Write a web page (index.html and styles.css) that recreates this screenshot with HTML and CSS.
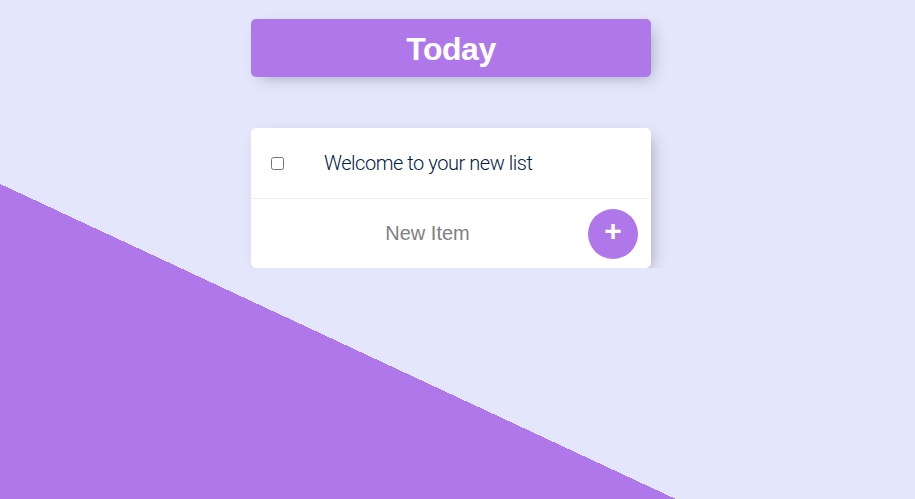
FILE: index.html
```html
<!DOCTYPE html>
<html lang="en">
<head>
<meta charset="utf-8">
<title>To Do List</title>
<link rel="stylesheet" href="styles.css">
</head>
<body>
<div class="page">
  <div class="box heading">
    <h1>Today</h1>
  </div>
  <div class="box list">
    <div class="item">
      <input type="checkbox" class="check">
      <p class="item-text">Welcome to your new list</p>
    </div>
    <form class="item add-form" onsubmit="return false;">
      <input type="text" class="new-item" placeholder="New Item" autocomplete="off">
      <button type="submit" class="add-btn">+</button>
    </form>
  </div>
</div>
</body>
</html>
```
FILE: styles.css
```css
html {
  height: 100%;
  background-color: #E4E6FC;
  background-image: linear-gradient(25deg, #B077EA 34.04%, #E4E6FC 34.04%);
  font-family: "Liberation Sans", Arial, sans-serif;
}

body {
  margin: 0;
}

.page {
  display: flex;
  flex-direction: column;
  align-items: center;
  padding-top: 19px;
  padding-right: 13px;
  gap: 51px;
}

.box {
  width: 400px;
  background: #ffffff;
  border-radius: 5px;
  box-shadow: 5px 5px 15px -5px rgba(0, 0, 0, 0.3);
}

.heading {
  background-color: #B077EA;
  text-align: center;
}

.heading h1 {
  margin: 0;
  height: 58px;
  line-height: 60px;
  color: #ffffff;
  font-size: 32px;
  font-weight: 700;
  letter-spacing: -0.5px;
}

.item {
  min-height: 70px;
  display: flex;
  align-items: center;
  border-bottom: 1px solid #F1F1F1;
}

.item:last-child {
  border-bottom: 0;
  min-height: 69px;
}

.check {
  margin: 0 20px;
  width: 13px;
  height: 13px;
}

.item-text {
  margin: 0;
  padding: 0 20px;
  font-family: Roboto, "Liberation Sans", sans-serif;
  font-size: 20px;
  font-weight: 300;
  color: #00204A;
  letter-spacing: -0.45px;
}

.add-form {
  margin: 0;
  padding-left: 20px;
  gap: 4px;
}

.new-item {
  text-align: center;
  height: 60px;
  width: 313px;
  padding: 0;
  border: none;
  font-family: "Liberation Sans", Arial, sans-serif;
  font-size: 20px;
  color: #00204A;
  background: transparent;
}

.new-item::placeholder {
  color: #808080;
  opacity: 1;
}

.new-item:focus {
  outline: none;
}

.add-btn {
  width: 50px;
  height: 50px;
  border-radius: 50%;
  border: 0;
  padding: 0 0 6px 0;
  background-color: #B077EA;
  color: #ffffff;
  font-family: "Liberation Sans", Arial, sans-serif;
  font-size: 30px;
  font-weight: 700;
  line-height: 1;
}
```
